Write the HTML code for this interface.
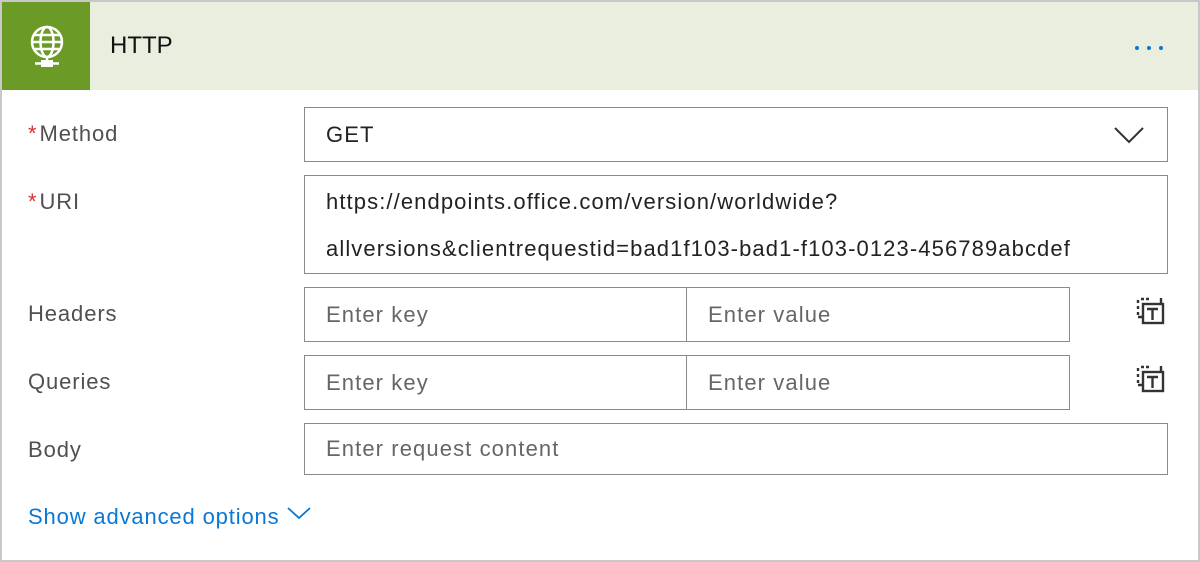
<!DOCTYPE html>
<html><head><style>
body{margin:0;width:1200px;height:562px;background:#fff;font-family:"Liberation Sans",sans-serif;overflow:hidden;position:relative}
.card{position:absolute;left:0;top:0;width:1196px;height:558px;border:2px solid #c8c8c8}
.hdr{position:absolute;left:0;top:0;width:1196px;height:88px;background:#e9eedf}
.ic{position:absolute;left:0;top:0;width:88px;height:88px;background:#6c9a27}
.title{position:absolute;left:108px;top:30px;font-size:24px;color:#111}
.dots{position:absolute;left:1133px;top:44px;height:4px;display:flex}
.dots i{display:block;width:4px;height:4px;border-radius:2px;background:#0a78d4;margin-right:8px}
.lbl{position:absolute;left:26px;font-size:22px;letter-spacing:0.9px;color:#505050}
.lbl b{color:#d13438;font-weight:normal;margin-right:2px}
.box{position:absolute;border:1px solid #8a8a8a;box-sizing:border-box;font-size:22px;letter-spacing:1.1px;color:#222;padding-left:21px;white-space:nowrap}
.ph{color:#666}
.sa{position:absolute;left:26px;top:502px;font-size:22px;letter-spacing:0.85px;color:#0a78d4}
</style></head><body>
<div class="card">
<div class="hdr"><div class="ic">
<svg width="88" height="88" viewBox="0 0 88 88" fill="none" stroke="#fff" stroke-width="2.5">
<circle cx="45" cy="40" r="15"/><ellipse cx="45" cy="40" rx="6.5" ry="15"/><line x1="30" y1="40" x2="60" y2="40"/><line x1="32" y1="33" x2="58" y2="33"/><line x1="32" y1="47" x2="58" y2="47"/><line x1="45" y1="55" x2="45" y2="60"/>
<rect x="39" y="58" width="12" height="7" fill="#fff" stroke="none"/><line x1="33" y1="61.5" x2="57" y2="61.5"/></svg>
</div><div class="title">HTTP</div><div class="dots"><i></i><i></i><i></i></div></div>
<div class="lbl" style="top:119px"><b>*</b>Method</div>
<div class="box" style="left:302px;top:105px;width:864px;height:55px;line-height:53px">GET
<svg style="position:absolute;right:22px;top:18px" width="32" height="18" viewBox="0 0 32 18"><path d="M2 2 L16 16 L30 2" fill="none" stroke="#333" stroke-width="2"/></svg></div>
<div class="lbl" style="top:187px"><b>*</b>URI</div>
<div class="box" style="left:302px;top:173px;width:864px;height:99px;line-height:47px;padding-top:2px">https://endpoints.office.com/version/worldwide?<br>allversions&amp;clientrequestid=bad1f103-bad1-f103-0123-456789abcdef</div>
<div class="lbl" style="top:299px">Headers</div>
<div class="box ph" style="left:302px;top:285px;width:383px;height:55px;line-height:53px">Enter key</div>
<div class="box ph" style="left:684px;top:285px;width:384px;height:55px;line-height:53px">Enter value</div>
<div class="lbl" style="top:367px">Queries</div>
<div class="box ph" style="left:302px;top:353px;width:383px;height:55px;line-height:53px">Enter key</div>
<div class="box ph" style="left:684px;top:353px;width:384px;height:55px;line-height:53px">Enter value</div>
<svg style="position:absolute;left:1132px;top:294px" width="32" height="32" viewBox="0 0 32 32"><g fill="none" stroke="#333" stroke-width="2.4"><path d="M4 4v3M4 10v3M4 16v3M7 3h3M12 3h3M4 21h4"/><rect x="9" y="8" width="20" height="19"/><path d="M27 2v6"/></g><path d="M13 13h11M18.5 13v11" stroke="#333" stroke-width="2.4"/></svg>
<svg style="position:absolute;left:1132px;top:362px" width="32" height="32" viewBox="0 0 32 32"><g fill="none" stroke="#333" stroke-width="2.4"><path d="M4 4v3M4 10v3M4 16v3M7 3h3M12 3h3M4 21h4"/><rect x="9" y="8" width="20" height="19"/><path d="M27 2v6"/></g><path d="M13 13h11M18.5 13v11" stroke="#333" stroke-width="2.4"/></svg>
<div class="lbl" style="top:435px">Body</div>
<div class="box ph" style="left:302px;top:421px;width:864px;height:52px;line-height:50px">Enter request content</div>
<div class="sa">Show advanced options <svg width="26" height="14" viewBox="0 0 26 14" style="vertical-align:4px"><path d="M2 2l11 10 11-10" fill="none" stroke="#0a78d4" stroke-width="1.8"/></svg></div>
</div>
</body></html>
